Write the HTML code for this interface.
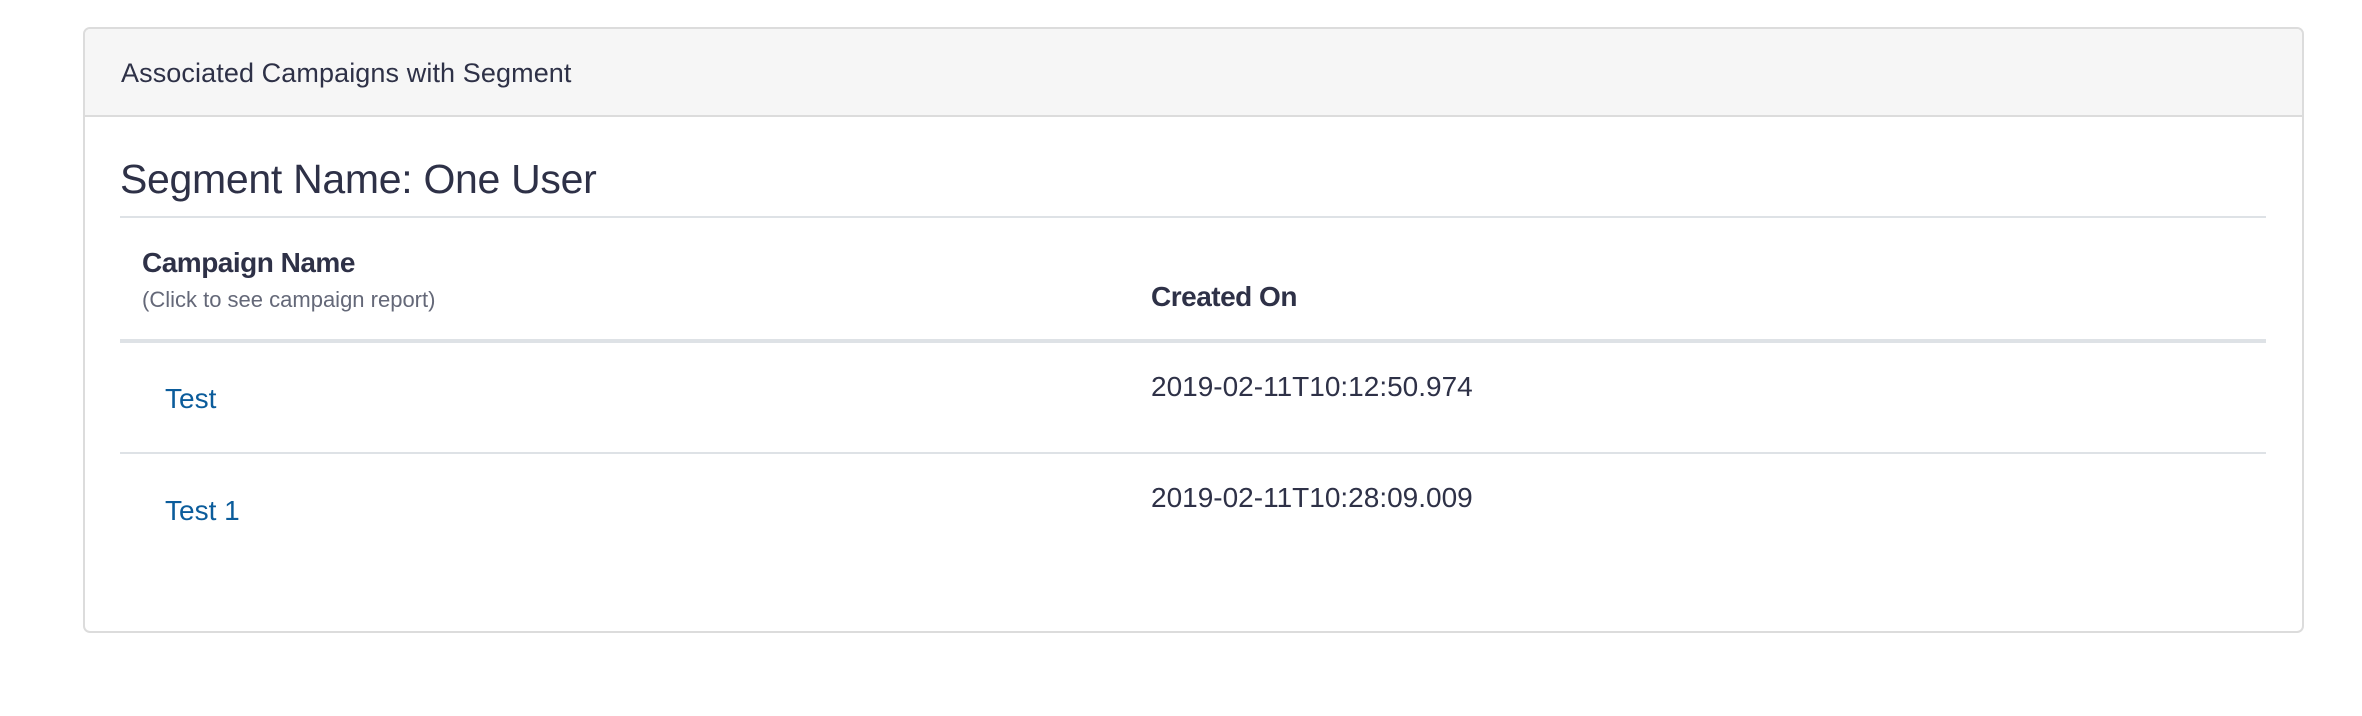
<!DOCTYPE html>
<html><head><meta charset="utf-8"><style>
html,body{margin:0;padding:0;background:#fff;width:2362px;height:716px;overflow:hidden;font-family:"Liberation Sans",sans-serif;color:#2e3147}
.a{position:absolute;white-space:nowrap;line-height:1}
.panel{position:absolute;left:83px;top:27px;width:2217px;height:602px;border:2px solid #dcdcdc;border-radius:7px;overflow:hidden;background:#fff}
.hdr{position:absolute;left:0;top:0;right:0;height:86px;background:#f6f6f6;border-bottom:2px solid #dcdcdc}
.ln{position:absolute;left:120px;width:2146px;background:#dee2e6}
.lk{color:#0b5c9b}
</style></head><body>
<div class="panel"><div class="hdr"></div></div>
<div class="a" style="left:121px;top:60px;font-size:27px;letter-spacing:0.1px">Associated Campaigns with Segment</div>
<div class="a" style="left:120px;top:159px;font-size:41px;letter-spacing:-0.3px">Segment Name: One User</div>
<div class="ln" style="top:216px;height:2px"></div>
<div class="a" style="left:142px;top:249px;font-size:28px;font-weight:bold;letter-spacing:-0.5px">Campaign Name</div>
<div class="a" style="left:142px;top:289px;font-size:22px;color:#646878">(Click to see campaign report)</div>
<div class="a" style="left:1151px;top:283px;font-size:28px;font-weight:bold;letter-spacing:-0.5px">Created On</div>
<div class="ln" style="top:339px;height:4px"></div>
<div class="a lk" style="left:165px;top:385px;font-size:28px;">Test</div>
<div class="a" style="left:1151px;top:373px;font-size:28px;">2019-02-11T10:12:50.974</div>
<div class="ln" style="top:452px;height:2px"></div>
<div class="a lk" style="left:165px;top:497px;font-size:28px;">Test 1</div>
<div class="a" style="left:1151px;top:484px;font-size:28px;">2019-02-11T10:28:09.009</div>
</body></html>
